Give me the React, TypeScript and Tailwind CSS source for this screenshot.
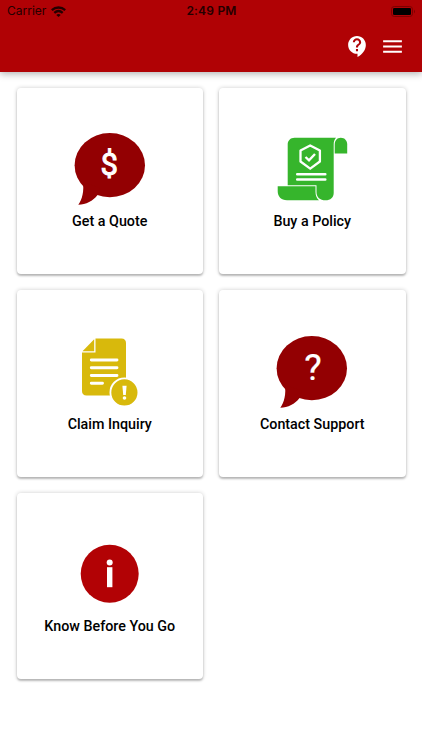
import React from 'react';
import { MdContactSupport, MdMenu } from 'react-icons/md';

const Bubble: React.FC<{ children: React.ReactNode }> = ({ children }) => (
  <svg width="80" height="80" viewBox="0 0 80 80">
    <ellipse cx="39.8" cy="35.2" rx="35.2" ry="32.1" fill="#930002" />
    <path d="M13 52C14 61 12.5 69 8.3 74.8C16 74.5 23 71 27.5 65L30 58Z" fill="#930002" />
    {children}
  </svg>
);

const QuoteIcon: React.FC = () => (
  <Bubble>
    <text x="39.3" y="45.2" fontSize="31" textAnchor="middle" fill="#fff" stroke="#fff" strokeWidth="1" className="font-['Roboto'] font-normal">
      $
    </text>
  </Bubble>
);

const SupportIcon: React.FC = () => (
  <Bubble>
    <text x="41" y="47" fontSize="37" textAnchor="middle" fill="#fff" stroke="#fff" strokeWidth="0.2" className="font-['Roboto'] font-normal">
      ?
    </text>
  </Bubble>
);

const PolicyIcon: React.FC = () => (
  <svg width="80" height="80" viewBox="0 0 80 80">
    <path d="M22.5 7.7H64C62.3 9.5 61.7 11.5 61.7 14.5V63C61.7 67.5 58.5 70.3 53.5 70.3C48 70.3 44.5 67.5 44.5 62V55.3H15.7V14.5C15.7 10.5 18.5 7.7 22.5 7.7Z" fill="#36b52c" />
    <path d="M62.7 23.6V14.5C62.7 10.5 65 7.7 68.8 7.7C72.7 7.7 75.2 10.5 75.2 14.5V23.6Z" fill="#36b52c" />
    <path d="M5.7 56.3H43.5V62C43.5 65.5 44.8 68.3 47 70.3H15C9 70.3 5.7 66.5 5.7 61Z" fill="#36b52c" />
    <path d="M38.2 15.5L47.9 20.6V31.5L38.2 38.7L28.5 31.5V20.6Z" fill="none" stroke="#fff" strokeWidth="2.3" strokeLinejoin="round" />
    <path d="M33.5 27L37 30.3L43 24" fill="none" stroke="#fff" strokeWidth="2.4" />
    <path d="M25.2 44.2H53.3M25.2 49.4H53.3" stroke="#fff" strokeWidth="2.5" strokeLinecap="round" />
  </svg>
);

const ClaimIcon: React.FC = () => (
  <svg width="80" height="80" viewBox="0 0 80 80">
    <path d="M25.5 5.5H51.5C54.3 5.5 56 7.2 56 10V62.5H16.5C13.7 62.5 12 60.8 12 58V19.5H25.5Z" fill="#d8b90c" />
    <path d="M12.5 18.2L24.2 6.2V18.2Z" fill="#d8b90c" />
    <path d="M21.3 27H47M21.3 34.8H47M21.3 42.5H47M21.3 50.3H32.5" stroke="#fff" strokeWidth="2.9" strokeLinecap="round" />
    <circle cx="54.4" cy="59.4" r="14" fill="#d8b90c" stroke="#fff" strokeWidth="1.8" />
    <path d="M52.4 52.7H56.6L55.8 62H53.2Z" fill="#fff" />
    <circle cx="54.5" cy="65" r="1.8" fill="#fff" />
  </svg>
);

const InfoIcon: React.FC = () => (
  <svg width="80" height="80" viewBox="0 0 80 80">
    <circle cx="39.7" cy="38.8" r="29" fill="#b20205" />
    <circle cx="39.7" cy="27.4" r="3" fill="#fff" />
    <rect x="37" y="32.2" width="5.4" height="20" fill="#fff" />
  </svg>
);

const items = [
  { label: 'Get a Quote', icon: <QuoteIcon /> },
  { label: 'Buy a Policy', icon: <PolicyIcon /> },
  { label: 'Claim Inquiry', icon: <ClaimIcon /> },
  { label: 'Contact Support', icon: <SupportIcon /> },
  { label: 'Know Before You Go', icon: <InfoIcon /> },
];

const StatusBar: React.FC = () => (
  <div className="grid h-[22px] grid-cols-3 items-center pl-[7px] pr-[6px] font-['Inter'] text-[#240000]">
    <div className="flex items-center gap-[5px] text-[12px]">
      <span>Carrier</span>
      <svg width="15" height="11" viewBox="0 0 15 11" fill="none" stroke="currentColor" strokeWidth="2.3">
        <path d="M0.8 4.2C4.7 0.6 10.3 0.6 14.2 4.2" />
        <path d="M3.3 6.9C5.8 4.7 9.2 4.7 11.7 6.9" />
        <path d="M5.3 8.9C6.6 7.8 8.4 7.8 9.7 8.9L7.5 11Z" fill="currentColor" stroke="none" />
      </svg>
    </div>
    <div className="text-center text-[12px] font-semibold tracking-[0.2px]">2:49 PM</div>
    <svg className="justify-self-end" width="25" height="11" viewBox="0 0 25 11">
      <rect x="0.5" y="0.5" width="21" height="10" rx="2.8" fill="none" stroke="#7d0000" />
      <rect x="2" y="2" width="18" height="7" rx="1.3" fill="#000" />
      <path d="M23 3.8C24.3 4.3 24.3 6.7 23 7.2Z" fill="#7d0000" />
    </svg>
  </div>
);

const App: React.FC = () => {
  return (
    <div className="min-h-[750px] w-[422px] bg-white font-['Roboto',sans-serif]">
      <header className="h-[71.5px] bg-[#b00205] shadow-[0_2px_7px_rgba(0,0,0,0.3)]">
        <StatusBar />
        <div className="flex h-[49px] items-center justify-end gap-[10px] pr-[17px] text-white">
          <MdContactSupport className="size-[25px]" />
          <MdMenu className="size-[25px]" />
        </div>
      </header>

      <main className="grid grid-cols-2 gap-[16px] px-[16.5px] pt-[16px]">
        {items.map((item) => (
          <div
            key={item.label}
            className="flex h-[186.5px] flex-col items-center rounded-[4px] bg-white pt-[42.5px] shadow-[0_2px_2px_rgba(0,0,0,0.22),0_0_4px_rgba(0,0,0,0.2)]"
          >
            {item.icon}
            <span className="text-[14.3px] leading-[22px] font-medium text-black">{item.label}</span>
          </div>
        ))}
      </main>
    </div>
  );
};

export default App;
